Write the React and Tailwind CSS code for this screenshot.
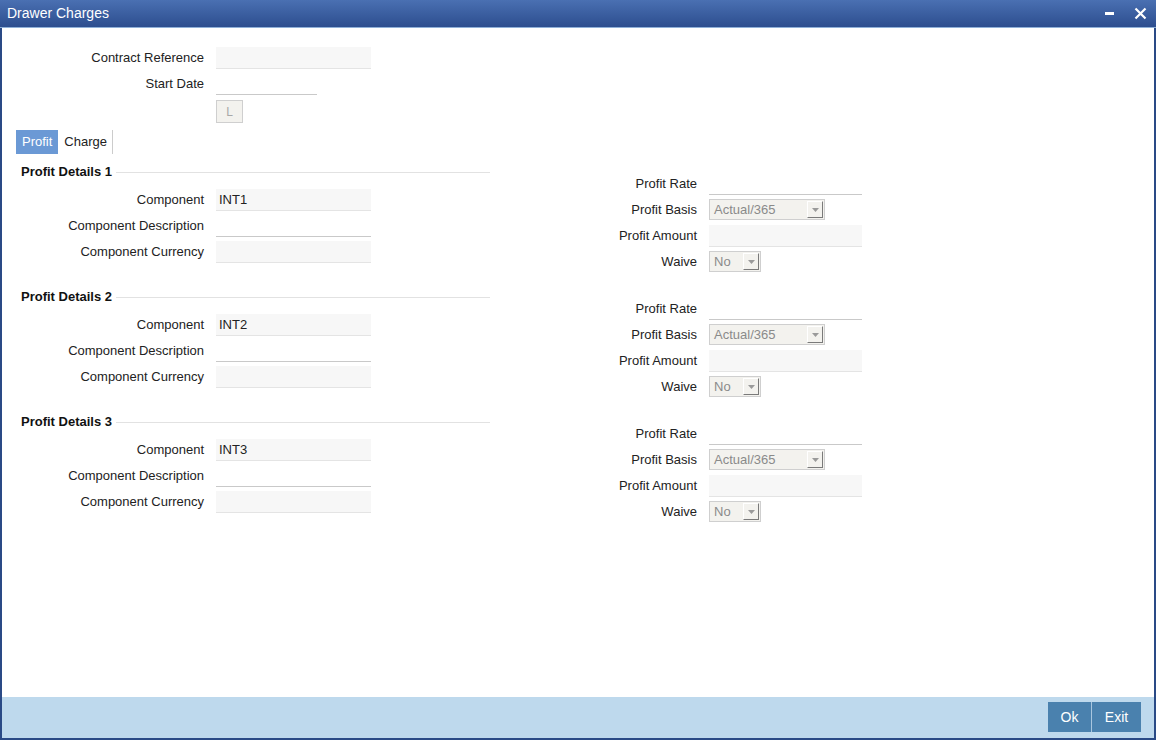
import React from "react";

const GrayInput = ({ value, w = "w-[155px]" }) => (
  <div className={`${w} h-[22px] bg-[#f7f7f7] border-b border-[#e4e4e4] pl-[3px] flex items-center text-[13px] text-[#222]`}>
    {value}
  </div>
);

const WhiteInput = ({ w = "w-[155px]" }) => (
  <div className={`${w} h-[22px] bg-white border-b border-[#c9c9c9]`} />
);

const Select = ({ value, w }) => (
  <div className={`${w} h-[21px] bg-[#f3f2ee] border border-[#cfcfcf] flex items-center justify-between pl-[4px] pr-[1px]`}>
    <span className="text-[13px] text-[#8a8a8a]">{value}</span>
    <span className="w-[16px] h-[17px] bg-[#f3f2ee] border-t border-l border-t-white border-l-white border-r border-b border-r-[#7a7a7a] border-b-[#7a7a7a] flex items-center justify-center">
      <svg width="7" height="4" viewBox="0 0 7 4">
        <path d="M0 0h7L3.5 4z" fill="#9a9a9a" />
      </svg>
    </span>
  </div>
);

const Row = ({ label, labelW, children, h = "h-[26px]" }) => (
  <div className={`flex items-start ${h}`}>
    <div className={`${labelW} text-right pr-[12px] h-[22px] flex items-center justify-end`}>{label}</div>
    {children}
  </div>
);

const Section = ({ n }) => (
  <div className="flex h-[125px]">
    <div className="w-[488px]">
      <div className="flex items-center h-[20px] pl-[19px]">
        <span className="font-bold text-[13px] text-[#111] pr-[4px]">Profit Details {n}</span>
        <div className="flex-1 h-px bg-[#e2e2e2]" />
      </div>
      <div className="mt-[7px]">
        <Row label="Component" labelW="w-[214px]">
          <GrayInput value={`INT${n}`} />
        </Row>
        <Row label="Component Description" labelW="w-[214px]">
          <WhiteInput />
        </Row>
        <Row label="Component Currency" labelW="w-[214px]">
          <GrayInput />
        </Row>
      </div>
    </div>
    <div className="pt-[11px]">
      <Row label="Profit Rate" labelW="w-[219px]">
        <WhiteInput w="w-[153px]" />
      </Row>
      <Row label="Profit Basis" labelW="w-[219px]">
        <Select value="Actual/365" w="w-[116px]" />
      </Row>
      <Row label="Profit Amount" labelW="w-[219px]">
        <GrayInput w="w-[153px]" />
      </Row>
      <Row label="Waive" labelW="w-[219px]">
        <Select value="No" w="w-[52px]" />
      </Row>
    </div>
  </div>
);

export default function App() {
  return (
    <div className="w-[1156px] h-[740px] flex flex-col bg-white text-[13px] text-[#222] font-['Liberation_Sans',Arial,sans-serif] overflow-hidden">
      {/* Title bar */}
      <div className="h-[28px] flex items-center justify-between bg-gradient-to-b from-[#4a70b2] to-[#2d4e8f] border-b border-[#8fb0d8] shrink-0">
        <span className="pl-[7px] text-white text-[14px]">Drawer Charges</span>
        <div className="flex items-center gap-[20px] pr-[9px]">
          <div className="w-[9px] h-[3px] bg-white" />
          <svg width="13" height="13" viewBox="0 0 13 13">
            <path d="M1.5 1.5l10 10M11.5 1.5l-10 10" stroke="white" strokeWidth="2.2" />
          </svg>
        </div>
      </div>

      {/* Body */}
      <div className="flex-1 border-l-2 border-r-2 border-[#2a4a86] flex flex-col">
        <div className="pt-[19px]">
          <Row label="Contract Reference" labelW="w-[214px]">
            <GrayInput />
          </Row>
          <Row label="Start Date" labelW="w-[214px]">
            <WhiteInput w="w-[101px]" />
          </Row>
          <div className="pl-[214px] mt-[1px]">
            <div className="w-[27px] h-[23px] bg-[#f3f2ee] border border-[#cfcfcf] flex items-center justify-center text-[12px] text-[#a8a8a8]">
              L
            </div>
          </div>
        </div>

        {/* Tabs */}
        <div className="flex pl-[14px] mt-[7px] h-[24px]">
          <div className="px-[6px] bg-[#6b99d5] text-white flex items-center">Profit</div>
          <div className="pl-[6px] pr-[5px] border-r border-[#cccccc] flex items-center">Charge</div>
        </div>

        <div className="mt-[8px]">
          <Section n={1} />
          <Section n={2} />
          <Section n={3} />
        </div>
      </div>

      {/* Footer */}
      <div className="h-[43px] bg-[#bed9ed] border-l-2 border-r-2 border-b-2 border-[#2a4a86] flex items-center justify-end pr-[13px] shrink-0">
        <div className="flex h-[30px] mb-[1px]">
          <button className="w-[44px] bg-[#4a81ae] text-white text-[14px] border-r border-[#a9c6df]">Ok</button>
          <button className="w-[49px] bg-[#4a81ae] text-white text-[14px]">Exit</button>
        </div>
      </div>
    </div>
  );
}
